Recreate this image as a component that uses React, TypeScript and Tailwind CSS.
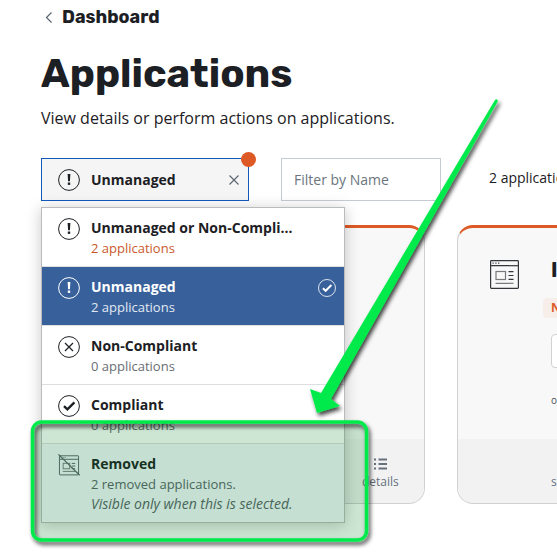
import React from "react";

type IconProps = { className?: string };

const AlertIcon = ({ className = "" }: IconProps) => (
  <svg viewBox="0 0 22 22" className={`size-[22px] shrink-0 ${className}`} fill="none" stroke="currentColor" aria-hidden="true">
    <circle cx="11" cy="11" r="10.4" strokeWidth="1" />
    <path d="M9.600 5h2.800l-.5 7.200h-1.800z" fill="currentColor" stroke="none" />
    <path d="M11 13.500v2.400" strokeWidth="2.400" />
  </svg>
);

const CrossIcon = ({ className = "" }: IconProps) => (
  <svg viewBox="0 0 22 22" className={`size-[22px] shrink-0 ${className}`} fill="none" stroke="currentColor" aria-hidden="true">
    <circle cx="11" cy="11" r="10.4" strokeWidth="1" />
    <path d="M7 7l8 8M15 7l-8 8" strokeWidth="1.2" />
  </svg>
);

const CheckIcon = ({ className = "" }: IconProps) => (
  <svg viewBox="0 0 22 22" className={`shrink-0 ${className}`} fill="none" stroke="currentColor" aria-hidden="true">
    <circle cx="11" cy="11" r="10.4" strokeWidth="1" />
    <path d="M6 11.200l3.400 3.200 7-7" strokeWidth="2.400" />
  </svg>
);

const WindowShape = () => (
  <>
    <rect x=".6" y=".6" width="27.8" height="27.8" rx=".8" />
    <path d="M.6 5.700h27.8" />
    <path d="M2.500 3.200h1.200M5.300 3.200h1.200M8.100 3.200h1.200" />
    <rect x="6" y="11.500" width="9.500" height="8" stroke="#77797c" />
    <path d="M18.500 11.700h5M18.500 15.500h5M18.500 19.400h5" />
    <path d="M5.500 23.300h18" stroke="#77797c" />
  </>
);

const AppIcon = () => (
  <svg viewBox="0 0 29 29" className="size-[29px] shrink-0 text-[#33363a]" fill="none" stroke="currentColor" strokeWidth="1.2" aria-hidden="true">
    <WindowShape />
  </svg>
);

const RemovedIcon = ({ className = "" }: IconProps) => (
  <svg viewBox="-1 -2 31 32" className={`size-[22px] shrink-0 ${className}`} fill="none" stroke="currentColor" strokeWidth="1.4" aria-hidden="true">
    <WindowShape />
    <path d="M-1 -1.500L30 29" strokeWidth="1.800" />
  </svg>
);

const ListIcon = () => (
  <svg viewBox="0 0 13 12" className="h-3 w-[13px]" fill="none" stroke="currentColor" strokeWidth="1.8" aria-hidden="true">
    <path d="M0 1.500h2M4.500 1.500H13M0 6h2M4.500 6H13M0 10.500h2M4.500 10.500H13" />
  </svg>
);

type Option = {
  name: string;
  detail: string;
  note?: string;
  icon: React.ReactNode;
  row: string;
  detailColor: string;
  selected?: boolean;
};

const options: Option[] = [
  {
    name: "Unmanaged or Non-Compliant",
    detail: "2 applications",
    icon: <AlertIcon />,
    row: "bg-white text-[#1c2024]",
    detailColor: "text-[#c9592d]",
  },
  {
    name: "Unmanaged",
    detail: "2 applications",
    icon: <AlertIcon />,
    row: "bg-[#38619c] text-white",
    detailColor: "text-[#e3e9f2]",
    selected: true,
  },
  {
    name: "Non-Compliant",
    detail: "0 applications",
    icon: <CrossIcon />,
    row: "bg-white text-[#1c2024]",
    detailColor: "text-[#696e73]",
  },
  {
    name: "Compliant",
    detail: "0 applications",
    icon: <CheckIcon className="size-[22px]" />,
    row: "bg-white text-[#1c2024]",
    detailColor: "text-[#696e73]",
  },
  {
    name: "Removed",
    detail: "2 removed applications.",
    note: "Visible only when this is selected.",
    icon: <RemovedIcon className="text-[#596169]" />,
    row: "bg-[#f5f8ff] text-[#1c2024]",
    detailColor: "text-[#596169]",
  },
];

const StatusMenu = () => (
  <ul
    role="listbox"
    aria-label="Application status"
    className="absolute top-full -left-px z-10 mt-[7px] w-[304px] border border-[#b9bbbd] bg-white shadow-[0_2px_14px_rgba(0,0,0,0.22)]"
  >
    {options.map((o) => (
      <li key={o.name} role="option" aria-selected={!!o.selected} className="border-b border-[#dddedf] last:border-b-0">
        <button type="button" className={`flex w-full items-start gap-[11px] px-4 pt-2.5 pb-2 text-left ${o.row}`}>
          {o.icon}
          <span className="min-w-0 flex-1">
            <span className="block w-[204px] truncate text-sm leading-5 font-bold">{o.name}</span>
            <span className={`block text-[13px] leading-5 ${o.detailColor}`}>{o.detail}</span>
            {o.note && <span className={`block text-sm leading-5 italic ${o.detailColor}`}>{o.note}</span>}
          </span>
          {o.selected && <CheckIcon className="-mr-2 mt-0.5 size-[18px]" />}
        </button>
      </li>
    ))}
  </ul>
);

const Card = ({ children, footer }: { children?: React.ReactNode; footer: React.ReactNode }) => (
  <article className="flex h-[279px] w-96 shrink-0 flex-col overflow-hidden rounded-2xl border border-t-3 border-[#cfd1d3] border-t-[#dd5a26] bg-[#f8f8f8]">
    <div className="flex-1">{children}</div>
    <footer className="flex h-16 items-start bg-[#f2f2f2] pt-[19px] text-xs text-[#66717c]">{footer}</footer>
  </article>
);

const Annotation = () => (
  <svg className="pointer-events-none absolute top-0 left-0 z-20 h-[554px] w-[557px]" viewBox="0 0 557 554" fill="none" aria-hidden="true">
    <defs>
      <filter id="drop" x="-20%" y="-20%" width="140%" height="140%">
        <feDropShadow dx="2" dy="3" stdDeviation="2" floodColor="#000" floodOpacity="0.75" />
      </filter>
    </defs>
    <rect x="33" y="422" width="333" height="118" rx="9" fill="#057d23" fillOpacity="0.2" />
    <rect x="32.500" y="422" width="334" height="118" rx="9" stroke="#00ea4c" strokeWidth="3.500" filter="url(#drop)" />
    <path
      d="M495 100Q497 98 498 101L331 399L340 406L317 413L310 389L321 393Z"
      fill="#00ea4c"
      filter="url(#drop)"
    />
  </svg>
);

export default function App() {
  return (
    <div className="relative min-h-[554px] overflow-hidden bg-white pl-[41px] font-['Open_Sans','Noto_Sans',sans-serif] text-[#1c2024]">
      <nav className="pt-[5px]">
        <a href="#dashboard" className="flex items-center gap-[9px] pl-1 font-[Rubik,Inter,sans-serif] text-lg leading-6 font-bold">
          <svg viewBox="0 0 8 12" className="h-3 w-2" fill="none" stroke="#59636d" strokeWidth="1.200" aria-hidden="true">
            <path d="M6.500 1.500L1.500 6.500l5 5" />
          </svg>
          Dashboard
        </a>
      </nav>
      <h1 className="mt-5 font-[Rubik,Inter,sans-serif] text-[40px] leading-[50px] font-bold">Applications</h1>
      <p className="mt-[7px] text-base leading-6">View details or perform actions on applications.</p>

      <div className="mt-7 flex items-start">
        <div className="relative flex h-[43px] w-52 shrink-0 items-center border border-[#1059bd] bg-[#f5f5f5] pr-2">
          <button type="button" aria-haspopup="listbox" aria-expanded="true" className="flex flex-1 items-center gap-[11px] pl-4 text-sm leading-5 font-bold">
            <AlertIcon />
            Unmanaged
          </button>
          <button type="button" aria-label="Clear status" className="text-[#59636d]">
            <svg viewBox="0 0 12 12" className="size-3" fill="none" stroke="currentColor" strokeWidth="1.100" aria-hidden="true">
              <path d="M1.500 1.500l9 9M10.500 1.500l-9 9" />
            </svg>
          </button>
          <span className="absolute -top-[7px] -right-2 size-[15px] rounded-full bg-[#dd5a26]" />
          <StatusMenu />
        </div>
        <input
          type="text"
          aria-label="Filter by Name"
          placeholder="Filter by Name"
          className="ml-8 h-[43px] w-40 shrink-0 border border-[#c5cbd0] bg-white px-3 text-sm placeholder:text-[#6b757e]"
        />
        <span className="ml-12 shrink-0 pt-2.5 text-sm leading-5">2 applications</span>
      </div>

      <section className="mt-6 flex gap-8">
        <Card
          footer={
            <button type="button" className="ml-80 flex flex-col items-center gap-1">
              <ListIcon />
              <span className="leading-4">details</span>
            </button>
          }
        />
        <Card footer={<span className="ml-[93px] pt-4 leading-4">s</span>}>
          <div className="flex gap-6 pt-8 pl-8">
            <AppIcon />
            <div className="flex flex-1 flex-col">
              <h2 className="ml-2 font-[Rubik,Inter,sans-serif] text-xl leading-5 font-bold">I</h2>
              <span className="mt-[18px] w-24 rounded bg-[#f7eeea] px-2 text-xs leading-5 font-bold text-[#dd5a26]">N</span>
              <span className="mt-4 ml-2 h-[34px] w-48 rounded border border-[#cfd1d3] bg-white" />
              <span className="mt-6 ml-2 text-[10px] leading-4 text-[#4a5056]">o</span>
            </div>
          </div>
        </Card>
      </section>

      <Annotation />
    </div>
  );
}
